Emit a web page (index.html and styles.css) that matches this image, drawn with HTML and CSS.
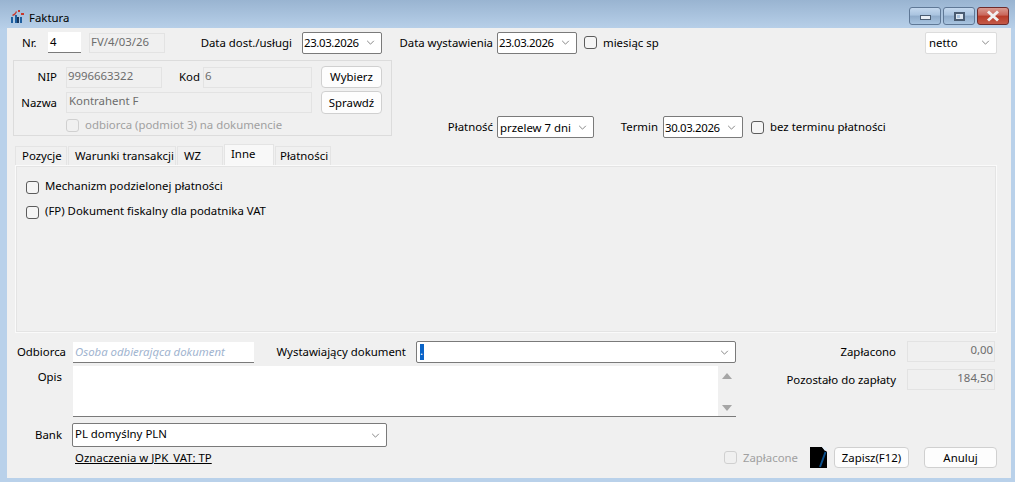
FILE: index.html
```html
<!DOCTYPE html>
<html lang="pl">
<head>
<meta charset="utf-8">
<title>Faktura</title>
<link rel="stylesheet" href="styles.css">
</head>
<body>
<div class="window">
  <header class="titlebar">
    <svg class="app-icon" viewBox="0 0 14 13" aria-hidden="true">
      <path class="ic-blue" d="M0 7h2v6H0zM4 5h2v8H4zM9 7h2v6H9z"/>
      <path class="ic-red" d="M1 5l3-2 1-2 1 1-2 3-2 1zM7 0h2v2H7zM10 3h3v2h-3z"/>
      <path class="ic-dark" d="M6 7h2v6H6z"/>
    </svg>
    <span class="title">Faktura</span>
    <div class="win-btns">
      <div class="win-btn"><span class="glyph-min"></span></div>
      <div class="win-btn"><span class="glyph-max"></span></div>
      <div class="win-btn close">
        <svg class="glyph-x" viewBox="0 0 16 12"><path d="M3 1.500l10 9M13 1.500l-10 9"/></svg>
      </div>
    </div>
  </header>

  <main class="client">
    <div class="row row-head">
      <span class="lbl nr-lbl">Nr.</span>
      <div class="edit nr-edit">4</div>
      <div class="ro fv">FV/4/03/26</div>
      <span class="lbl right w-dost">Data dost./usługi</span>
      <div class="combo w-date"><span class="date">23.03.2026</span><svg class="chev" viewBox="0 0 10 6"><path d="M1 1l4 4 4-4"/></svg></div>
      <span class="lbl right w-wyst">Data wystawienia</span>
      <div class="combo w-date"><span class="date">23.03.2026</span><svg class="chev" viewBox="0 0 10 6"><path d="M1 1l4 4 4-4"/></svg></div>
      <span class="cb cb-mies"></span>
      <span class="lbl cb-text">miesiąc sp</span>
      <div class="combo flat w-netto"><span>netto</span><svg class="chev" viewBox="0 0 10 6"><path d="M1 1l4 4 4-4"/></svg></div>
    </div>

    <div class="top">
      <section class="group">
        <div class="row">
          <span class="lbl right w-nip">NIP</span>
          <div class="ro nip">9996663322</div>
          <span class="lbl right w-kod">Kod</span>
          <div class="ro kod">6</div>
          <button class="btn side-btn" type="button">Wybierz</button>
        </div>
        <div class="row row-name">
          <span class="lbl right w-nip">Nazwa</span>
          <div class="ro nazwa">Kontrahent F</div>
          <button class="btn side-btn tall" type="button">Sprawdź</button>
        </div>
        <div class="row row-third">
          <span class="cb disabled"></span>
          <span class="lbl cb-text muted">odbiorca (podmiot 3) na dokumencie</span>
        </div>
      </section>
      <div class="row pay">
        <span class="lbl right w-plat">Płatność</span>
        <div class="combo w-przelew"><span class="pad">przelew 7 dni</span><svg class="chev" viewBox="0 0 10 6"><path d="M1 1l4 4 4-4"/></svg></div>
        <span class="lbl right w-term">Termin</span>
        <div class="combo w-date"><span class="date">30.03.2026</span><svg class="chev" viewBox="0 0 10 6"><path d="M1 1l4 4 4-4"/></svg></div>
        <span class="cb cb-bez"></span>
        <span class="lbl cb-text">bez terminu płatności</span>
      </div>
    </div>

    <nav class="tabs">
      <div class="tab t-poz">Pozycje</div>
      <div class="tab t-war">Warunki transakcji</div>
      <div class="tab t-wz">WZ</div>
      <div class="tab active t-inn">Inne</div>
      <div class="tab t-pla">Płatności</div>
    </nav>
    <section class="panel">
      <div class="row check-row"><span class="cb"></span><span class="lbl cb-text">Mechanizm podzielonej płatności</span></div>
      <div class="row check-row"><span class="cb"></span><span class="lbl cb-text">(FP) Dokument fiskalny dla podatnika VAT</span></div>
    </section>

    <div class="bottom">
      <div class="bottom-left">
        <div class="row">
          <span class="lbl right w-side">Odbiorca</span>
          <div class="edit odb">Osoba odbierająca dokument</div>
          <span class="lbl right w-wys">Wystawiający dokument</span>
          <div class="combo w-wcombo"><span class="sel">.</span><svg class="chev" viewBox="0 0 10 6"><path d="M1 1l4 4 4-4"/></svg></div>
        </div>
        <div class="row row-opis">
          <span class="lbl right w-side opis-lbl">Opis</span>
          <div class="memo">
            <div class="scroll"><span class="arrow up"></span><span class="arrow down"></span></div>
          </div>
        </div>
        <div class="row row-bank">
          <span class="lbl right w-side bank-lbl">Bank</span>
          <div class="combo w-bank"><span class="bank-text">PL domyślny PLN</span><svg class="chev" viewBox="0 0 10 6"><path d="M1 1l4 4 4-4"/></svg></div>
        </div>
      </div>
      <div class="bottom-right">
        <div class="row"><span class="lbl right w-sum">Zapłacono</span><div class="ro sum">0,00</div></div>
        <div class="row row-sum2"><span class="lbl right w-sum">Pozostało do zapłaty</span><div class="ro sum">184,50</div></div>
      </div>
    </div>

    <footer class="row foot">
      <a class="jpk" href="#">Oznaczenia w JPK_VAT: TP</a>
      <div class="row foot-actions">
        <span class="cb disabled"></span>
        <span class="lbl cb-text muted">Zapłacone</span>
        <svg class="doc" viewBox="0 0 17 21" aria-hidden="true">
          <path class="doc-page" d="M0 0h12l5 5v16H0z"/>
          <path class="doc-fold" d="M12 0l4 0 1 3-2 1z"/>
          <path class="doc-line" d="M15.500 5L10 20"/>
        </svg>
        <button class="btn save" type="button">Zapisz(F12)</button>
        <button class="btn cancel" type="button">Anuluj</button>
      </div>
    </footer>
  </main>
</div>
</body>
</html>
```

FILE: styles.css
```css
* { box-sizing: border-box; }
html, body { margin: 0; padding: 0; }
body {
  width: 1015px;
  height: 482px;
  overflow: hidden;
  font-family: "Noto Sans", "Open Sans", sans-serif;
  font-size: 11.4px;
  color: #000;
}
.window {
  width: 1015px;
  height: 482px;
  padding: 0 4px 4px 7px;
  background: linear-gradient(#99b4d1 0, #b9d1ea 30px);
  display: flex;
  flex-direction: column;
}
.titlebar {
  height: 28px;
  flex: none;
  display: flex;
  align-items: center;
}
.app-icon { width: 14px; height: 13px; margin: 4px 0 0 4px; }
.ic-blue { fill: #1f5f9f; }
.ic-red { fill: #c8382c; }
.ic-dark { fill: #17365d; }
.title { margin: 6px 0 0 4px; }
.win-btns { margin-left: auto; display: flex; gap: 2px; align-self: flex-start; margin-top: 7px; margin-right: 2px; }
.win-btn {
  width: 32px;
  height: 18px;
  border: 1px solid #5f7896;
  border-radius: 3px;
  background: linear-gradient(#c4d8ee 0, #a9c3df 45%, #8fabca 50%, #a8c4e0 100%);
  display: flex;
  align-items: center;
  justify-content: center;
}
.win-btn.close {
  border-color: #6e2b2b;
  background: linear-gradient(#d99a90 0, #c9665a 45%, #b83a28 50%, #c45a48 100%);
}
.glyph-min { width: 11px; height: 5px; margin-top: 3px; background: #e8eef5; border: 1px solid #4a5c72; }
.glyph-max { width: 11px; height: 9px; background: #dfe8f2; border: 2px solid #4a5c72; }
.glyph-max::after { content: ""; display: block; width: 3px; height: 3px; margin: 1px; background: #a9c3df; }
.glyph-x { width: 16px; height: 12px; }
.glyph-x path { fill: none; stroke: #f0f0f0; stroke-width: 3; }

.client {
  flex: 1;
  background: #f0f0f0;
  padding-top: 4px;
  display: flex;
  flex-direction: column;
}
.row { display: flex; align-items: center; }
.lbl { white-space: nowrap; line-height: 16px; }
.right { text-align: right; flex: none; }
.muted { color: #a0a0a0; }

.row-head { height: 21px; padding-right: 14px; }
.nr-lbl { width: 26px; margin-left: 15px; }
.edit {
  height: 21px;
  background: #fff;
  border-bottom: 1px solid #7a7a7a;
  padding: 1px 3px 0;
  line-height: 17px;
  white-space: nowrap;
}
.nr-edit { width: 33px; padding-left: 2px; }
.ro {
  height: 21px;
  background: #f0f0f0;
  border: 1px solid #e3e3e3;
  color: #6d6d6d;
  padding: 0 1px;
  line-height: 15px;
  white-space: nowrap;
  overflow: hidden;
  flex: none;
}
.fv { width: 76px; margin-left: 8px; height: 20px; line-height: 16px; }
.w-dost { width: 127px; margin-right: 10px; }
.w-wyst { width: 111px; margin-right: 4px; }
.combo {
  height: 22px;
  background: #fff;
  border: 1px solid #7a7a7a;
  border-radius: 2px;
  display: flex;
  align-items: center;
  justify-content: space-between;
  padding: 0 6px 0 1px;
  flex: none;
  white-space: nowrap;
}
.combo.flat { border-color: #dcdcdc; padding-left: 3px; }
.combo .pad { padding-left: 1px; }
.date { letter-spacing: -0.35px; }
.chev { width: 9px; height: 5px; flex: none; }
.chev path { fill: none; stroke: #707070; stroke-width: 1; }
.w-date { width: 80px; }
.w-netto { width: 72px; margin-left: auto; }
.cb {
  width: 13px;
  height: 13px;
  border: 1px solid #5c5c5c;
  border-radius: 3px;
  background: #f5f5f5;
  flex: none;
}
.cb.disabled { border-color: #d0d0d0; background: #f0f0f0; }
.cb-text { margin-left: 6px; }
.cb-mies { margin-left: 7px; }

.top { display: flex; align-items: flex-start; height: 83px; flex: none; }
.group {
  width: 379px;
  height: 76px;
  margin: 7px 0 0 6px;
  border: 1px solid #dcdcdc;
  padding: 5px 0 0 0;
  flex: none;
}
.w-nip { width: 43px; margin-right: 9px; }
.w-kod { width: 38px; margin-right: 3px; }
.nip { width: 96px; }
.kod { width: 109px; }
.nazwa { width: 246px; padding-left: 2px; }
.btn {
  font: inherit;
  color: #000;
  background: #fdfdfd;
  border: 1px solid #d0d0d0;
  border-radius: 4px;
  padding: 0;
  flex: none;
  line-height: 16px;
}
.side-btn { width: 61px; height: 22px; margin-left: 9px; }
.side-btn.tall { height: 23px; }
.row-name { margin-top: 3px; }
.row-third { margin: 3px 0 0 52px; }
.pay { margin: 63px 0 0 0; height: 22px; }
.w-plat { width: 101px; margin-right: 4px; }
.w-przelew { width: 97px; }
.w-term { width: 64px; margin-right: 5px; }
.cb-bez { margin-left: 8px; }

.tabs { display: flex; align-items: flex-end; height: 21px; margin: 8px 0 0 8px; flex: none; }
.tab {
  height: 19px;
  background: #f0f0f0;
  border: 1px solid #e4e4e4;
  border-bottom: 0;
  padding-left: 6px;
  line-height: 17px;
  margin-right: 1px;
  white-space: nowrap;
}
.t-poz { width: 52px; }
.t-war { width: 108px; }
.t-wz { width: 46px; }
.t-inn { width: 50px; height: 21px; background: #f8f8f8; }
.t-pla { width: 56px; padding-left: 4px; }
.panel {
  width: 982px;
  height: 168px;
  margin-left: 8px;
  flex: none;
  background: #f0f0f0;
  border: 1px solid #fafafa;
  outline: 1px solid #e4e4e4;
  outline-offset: -2px;
  padding: 14px 0 0 10px;
}
.check-row { height: 14px; margin-bottom: 11px; }
.check-row .cb-text { padding-bottom: 2px; }

.bottom { display: flex; margin-top: 8px; }
.bottom-left { width: 729px; flex: none; }
.w-side { width: 59px; margin-right: 7px; }
.odb {
  width: 181px;
  color: #9fb4cf;
  font-style: italic;
  padding-left: 2px;
  flex: none;
}
.w-wys { width: 152px; margin-right: 10px; }
.w-wcombo { width: 320px; height: 22px; }
.sel { background: #0a64c8; color: #fff; width: 4px; height: 16px; line-height: 14px; margin-left: 2px; }
.row-opis { margin-top: 3px; align-items: flex-start; }
.opis-lbl { padding-right: 4px; padding-top: 3px; }
.memo {
  width: 663px;
  height: 51px;
  background: #fff;
  border-bottom: 1px solid #7a7a7a;
  display: flex;
  justify-content: flex-end;
}
.scroll {
  width: 18px;
  height: 50px;
  background: #f0f0f0;
  display: flex;
  flex-direction: column;
  justify-content: space-between;
  align-items: center;
  padding: 7px 0 5px;
}
.arrow { width: 0; height: 0; border-left: 5px solid transparent; border-right: 5px solid transparent; }
.arrow.up { border-bottom: 6px solid #a6a6a6; }
.arrow.down { border-top: 6px solid #a6a6a6; }
.row-bank { margin-top: 6px; }
.bank-lbl { padding-right: 4px; margin-right: 6px; }
.w-bank { width: 315px; height: 24px; padding-left: 2px; }
.bank-text { padding-bottom: 4px; }

.bottom-right { flex: none; }
.w-sum { width: 160px; margin-right: 11px; }
.sum { width: 88px; text-align: right; padding-right: 1px; line-height: 16px; }
.row-sum2 { margin-top: 7px; }

.foot { height: 21px; margin-top: 0; }
.jpk { margin-left: 68px; color: #000; text-decoration: underline; line-height: 16px; }
.foot-actions { margin-left: auto; padding-right: 14px; }
.doc { width: 17px; height: 21px; margin: 0 7px 0 12px; }
.doc-page { fill: #000; }
.doc-fold { fill: #e8f0f8; }
.doc-line { fill: none; stroke: #0a4f8c; stroke-width: 2; }
.save { width: 75px; height: 21px; }
.cancel { width: 73px; height: 21px; margin-left: 15px; }
```
